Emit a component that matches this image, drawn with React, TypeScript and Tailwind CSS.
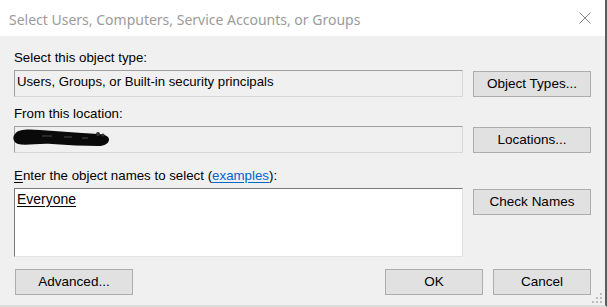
import React from 'react';

function WinButton({ label, className = '' }: { label: string; className?: string }) {
  return (
    <button
      className={`h-[26px] bg-[#e1e1e1] border border-[#adadad] text-black text-[13.5px] leading-[16px] flex items-center justify-center ${className}`}
    >
      {label}
    </button>
  );
}

function Scribble() {
  return (
    <svg
      className="absolute left-[-3px] top-[1px]"
      width="98"
      height="20"
      viewBox="0 0 98 20"
    >
      <path
        d="M3 6 C6 1 16 1 28 2 C42 3 56 4 70 5 C82 6 92 5 96 9 C99 13 95 18 86 18 C72 18 56 17 40 16 C26 15 14 18 6 16 C1 14 0 9 3 6 Z"
        fill="#0a0a0a"
      />
      <path d="M30 8 L40 8 M52 9 L60 9 M70 10 L76 10" stroke="#4a4a4a" strokeWidth="1" />
      <circle cx="86" cy="6" r="2" fill="#333" />
      <circle cx="91" cy="7" r="1.6" fill="#333" />
    </svg>
  );
}

export default function App() {
  return (
    <div className="w-[607px] h-[307px] flex flex-col bg-[#f0f0f0] border-r-2 border-r-[#5c5c5c] border-b-2 border-b-[#dcdcdc] overflow-hidden font-['Liberation_Sans',Arial,sans-serif] text-black">
      {/* Title bar */}
      <div className="h-[36px] shrink-0 bg-white flex items-center justify-between pl-[9px] pr-[14px]">
        <span className="text-[14px] text-[#9b9b9b] font-['Noto_Sans',sans-serif] leading-none mt-[3px]">
          Select Users, Computers, Service Accounts, or Groups
        </span>
        <svg width="12" height="12" viewBox="0 0 12 12">
          <path d="M0.5 0.5 L11.5 11.5 M11.5 0.5 L0.5 11.5" stroke="#8a8a8a" strokeWidth="1" />
        </svg>
      </div>

      {/* Body */}
      <div className="flex flex-col pl-[14px] pr-[14px] pt-[14px] text-[13.3px] leading-[16px]">
        <div className="mb-[4px]">Select this object type:</div>
        <div className="flex items-center gap-[10px]">
          <div className="w-[449px] h-[27px] border border-t-[#a0a0a0] border-l-[#a0a0a0] border-r-[#d8d8d8] border-b-[#d8d8d8] pl-[2px] pt-[3px] text-[13.2px] leading-[16px]">
            Users, Groups, or Built-in security principals
          </div>
          <WinButton label="Object Types..." className="w-[118px] h-[25px]" />
        </div>

        <div className="mt-[9px] mb-[4px]">From this location:</div>
        <div className="flex items-center gap-[10px]">
          <div className="relative w-[449px] h-[27px] border border-t-[#a0a0a0] border-l-[#a0a0a0] border-r-[#d8d8d8] border-b-[#d8d8d8]">
            <Scribble />
          </div>
          <WinButton label="Locations..." className="w-[118px] h-[25px]" />
        </div>

        <div className="mt-[15px] mb-[4px]">
          <span className="underline underline-offset-2">E</span>nter the object names to select (
          <span className="text-[#0066cc] underline underline-offset-2">examples</span>):
        </div>
        <div className="flex items-start gap-[10px]">
          <div className="w-[449px] h-[69px] bg-white border border-t-[#7a7a7a] border-l-[#7a7a7a] border-r-[#e3e3e3] border-b-[#e3e3e3] pl-[2px] pt-[2px] text-[14px] leading-[17px]">
            <span className="underline underline-offset-2">Everyone</span>
          </div>
          <WinButton label="Check Names" className="w-[118px] h-[25px] mt-[1px]" />
        </div>

        <div className="mt-[12px] flex items-center">
          <WinButton label="Advanced..." className="w-[118px] ml-[1px]" />
          <div className="flex-1" />
          <WinButton label="OK" className="w-[98px]" />
          <WinButton label="Cancel" className="w-[98px] ml-[10px]" />
        </div>
      </div>

      {/* Size grip */}
      <div className="relative flex-1">
        <div className="absolute right-[3px] bottom-[2px] grid grid-cols-3 gap-[2px]">
          <span className="w-[2px] h-[2px]" />
          <span className="w-[2px] h-[2px]" />
          <span className="w-[2px] h-[2px] bg-[#bcbcbc]" />
          <span className="w-[2px] h-[2px]" />
          <span className="w-[2px] h-[2px] bg-[#bcbcbc]" />
          <span className="w-[2px] h-[2px] bg-[#bcbcbc]" />
          <span className="w-[2px] h-[2px] bg-[#bcbcbc]" />
          <span className="w-[2px] h-[2px] bg-[#bcbcbc]" />
          <span className="w-[2px] h-[2px] bg-[#bcbcbc]" />
        </div>
      </div>
    </div>
  );
}
